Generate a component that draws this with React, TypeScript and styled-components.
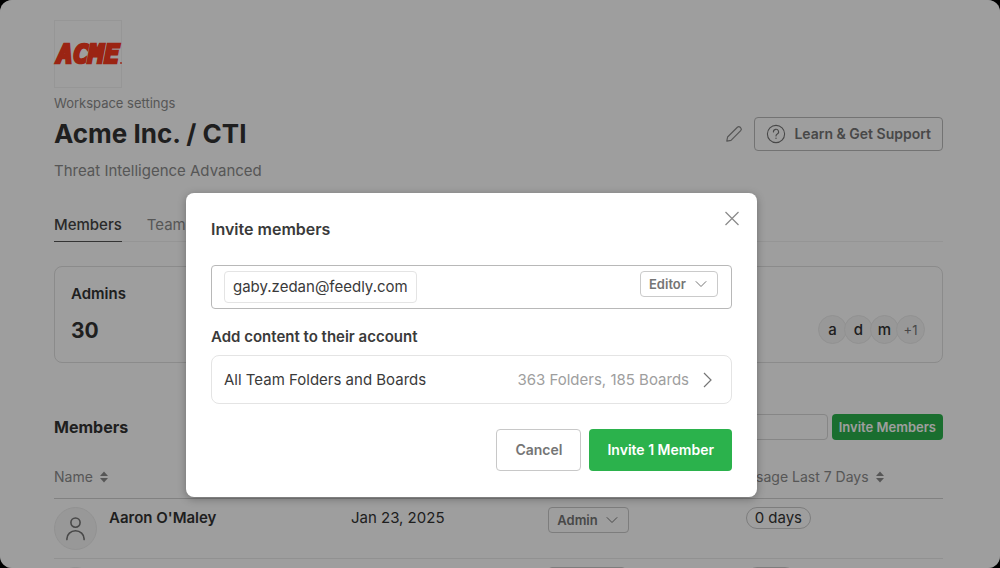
import React from "react";
import styled, { createGlobalStyle, css } from "styled-components";

const GlobalStyle = createGlobalStyle`
  *, *::before, *::after { box-sizing: border-box; }
  body {
    margin: 0;
    background: #000;
    color: #333;
    font-family: Inter, "Liberation Sans", sans-serif;
    font-size: 15px;
    line-height: 20px;
  }
  button, input, select { font: inherit; color: inherit; }
  button { cursor: pointer; }
  h1, h2, p { margin: 0; }
`;

const Frame = styled.div`
  position: relative;
  height: 100vh;
  overflow: hidden;
  border-radius: 12px;
  background: #fff;
`;

const Page = styled.main`
  padding: 20px 57px 0 54px;
`;

const Logo = styled.div`
  width: 68px;
  height: 68px;
  border: 1px solid #f3f3f3;
  svg {
    display: block;
    overflow: visible;
  }
  text {
    font-family: "DejaVu Sans Mono", "Liberation Mono", monospace;
    font-size: 26px;
    font-weight: 700;
    font-style: italic;
  }
`;

const Eyebrow = styled.p`
  margin-top: 5px;
  color: #8c8c8c;
  font-size: 13px;
`;

const TitleRow = styled.div`
  display: flex;
  align-items: center;
  justify-content: space-between;
  height: 42px;
`;

const Title = styled.h1`
  font-size: 26px;
  font-weight: 700;
  line-height: 32px;
`;

const TitleActions = styled.div`
  display: flex;
  align-items: center;
  gap: 11px;
`;

const IconButton = styled.button`
  display: flex;
  padding: 0;
  border: 0;
  background: none;
  color: #8c8c8c;
`;

const SupportButton = styled.button`
  display: flex;
  align-items: center;
  gap: 8px;
  height: 34px;
  padding: 0 11px;
  border: 1px solid #bababa;
  border-radius: 4px;
  background: none;
  color: #757575;
  font-size: 14px;
  font-weight: 600;
`;

const Subtitle = styled.p`
  margin-top: 6px;
  color: #8c8c8c;
`;

const Tabs = styled.nav`
  display: flex;
  gap: 25px;
  margin-top: 34px;
  border-bottom: 1px solid #f0f0f0;
`;

const Tab = styled.a<{ $active?: boolean }>`
  height: 27px;
  margin-bottom: -1px;
  border-bottom: 1px solid ${(p) => (p.$active ? "#555" : "transparent")};
  color: ${(p) => (p.$active ? "#444" : "#8c8c8c")};
  font-weight: ${(p) => (p.$active ? 500 : 400)};
  text-decoration: none;
`;

const StatsCard = styled.section`
  display: flex;
  align-items: flex-end;
  justify-content: space-between;
  height: 97px;
  margin-top: 24px;
  padding: 16px 17px 18px 16px;
  border: 1px solid #e0e0e0;
  border-radius: 8px;
`;

const StatLabel = styled.h2`
  font-size: 15px;
  font-weight: 600;
`;

const StatValue = styled.p`
  margin-top: 14px;
  font-size: 21px;
  font-weight: 700;
  line-height: 26px;
`;

const Avatars = styled.div`
  display: flex;
`;

const Avatar = styled.span<{ $muted?: boolean }>`
  display: flex;
  align-items: center;
  justify-content: center;
  width: 29px;
  height: 29px;
  border: 1px solid #ebebeb;
  border-radius: 50%;
  background: #f5f5f5;
  color: ${(p) => (p.$muted ? "#757575" : "#333")};
  font-size: ${(p) => (p.$muted ? 13 : 15)}px;
  font-weight: ${(p) => (p.$muted ? 400 : 500)};
  & + & { margin-left: -3px; }
`;

const SectionHeader = styled.div`
  display: flex;
  align-items: center;
  justify-content: space-between;
  margin-top: 51px;
`;

const SectionTitle = styled.h2`
  font-size: 16px;
  font-weight: 700;
`;

const SectionTools = styled.div`
  display: flex;
  gap: 4px;
`;

const SearchInput = styled.input`
  width: 200px;
  height: 26px;
  border: 1px solid #d8d8d8;
  border-radius: 4px;
  background: none;
`;

const solidGreen = css`
  border: 0;
  border-radius: 4px;
  background: #2bb24c;
  color: #fff;
  font-weight: 600;
`;

const SmallGreenButton = styled.button`
  ${solidGreen}
  height: 26px;
  padding: 0 7px;
  font-size: 13px;
`;

const Table = styled.table`
  width: 100%;
  margin-top: 16px;
  border-collapse: separate;
  border-spacing: 0;
  table-layout: fixed;
`;

const HeadCell = styled.th<{ $wide?: boolean }>`
  width: ${(p) => (p.$wide ? "33.4%" : "22.2%")};
  height: 43px;
  padding: 0;
  border-bottom: 1px solid #d0d0d0;
  text-align: left;
`;

const SortButton = styled.button`
  display: flex;
  align-items: center;
  gap: 7px;
  padding: 0;
  border: 0;
  background: none;
  color: #8c8c8c;
  font-size: 14px;
  font-weight: 400;
`;

const Cell = styled.td`
  height: 60px;
  padding: 8px 0;
  border-bottom: 1px solid #ebebeb;
  vertical-align: top;
`;

const Member = styled.div`
  display: flex;
  gap: 12px;
  font-weight: 600;
`;

const CellText = styled.span`
  display: block;
  height: 22px;
  line-height: 22px;
`;

const UserBadge = styled.span`
  display: flex;
  align-items: center;
  justify-content: center;
  width: 43px;
  height: 43px;
  border: 1px solid #ebebeb;
  border-radius: 50%;
  background: #f5f5f5;
  color: #757575;
`;

const DaysPill = styled.span`
  display: flex;
  align-items: center;
  width: fit-content;
  min-width: 50px;
  height: 22px;
  padding: 0 8px;
  border: 1px solid #cacaca;
  border-radius: 11px;
`;

const SelectWrap = styled.span<{ $width: number }>`
  display: flex;
  position: relative;
  width: ${(p) => p.$width}px;
  height: 26px;
  color: #757575;
  svg {
    position: absolute;
    top: 9px;
    right: 11px;
    pointer-events: none;
  }
`;

const Select = styled.select`
  appearance: none;
  width: 100%;
  padding: 0 8px;
  border: 1px solid #cacaca;
  border-radius: 4px;
  background: none;
  font-size: 13px;
  font-weight: 600;
`;

const Overlay = styled.div`
  display: flex;
  position: absolute;
  inset: 0;
  align-items: flex-start;
  justify-content: center;
  padding: 193px 57px 0 0;
  background: rgba(0, 0, 0, 0.38);
`;

const Dialog = styled.section`
  width: 571px;
  max-width: 100%;
  padding: 18px 25px 26px;
  border-radius: 8px;
  background: #fff;
  color: #3a3a3a;
  box-shadow: 0 2px 8px rgba(0, 0, 0, 0.3);
`;

const DialogHeader = styled.header`
  display: flex;
  align-items: flex-start;
  justify-content: space-between;
  height: 54px;
`;

const DialogTitle = styled.h2`
  padding-top: 8px;
  font-size: 16px;
  font-weight: 600;
`;

const CloseButton = styled(IconButton)`
  margin-right: -8px;
`;

const InviteField = styled.div`
  display: flex;
  height: 44px;
  padding: 5px 13px 5px 12px;
  border: 1px solid #b8b8b8;
  border-radius: 4px;
`;

const EmailChip = styled.span`
  display: flex;
  align-items: center;
  height: 32px;
  padding: 0 8px;
  border: 1px solid #e4e4e4;
  border-radius: 4px;
`;

const EmailInput = styled.input`
  flex: 1;
  min-width: 0;
  border: 0;
  outline: 0;
  background: none;
`;

const FieldLabel = styled.p`
  margin: 18px 0 8px;
  font-weight: 600;
`;

const ContentPicker = styled.button`
  display: flex;
  align-items: center;
  width: 100%;
  height: 49px;
  padding: 0 16px 0 12px;
  border: 1px solid #e4e4e4;
  border-radius: 8px;
  background: none;
  text-align: left;
`;

const PickerCount = styled.span`
  margin-left: auto;
  margin-right: 12px;
  color: #9e9e9e;
`;

const DialogFooter = styled.footer`
  display: flex;
  justify-content: flex-end;
  gap: 8px;
  margin-top: 25px;
`;

const CancelButton = styled.button`
  height: 42px;
  padding: 0 18px;
  border: 1px solid #c8c8c8;
  border-radius: 4px;
  background: none;
  color: #757575;
  font-size: 14px;
  font-weight: 600;
`;

const InviteButton = styled.button`
  ${solidGreen}
  height: 42px;
  padding: 0 18px;
  font-size: 14px;
`;

const AcmeLogo = () => (
  <svg width="66" height="66" viewBox="0 0 66 66" fill="#fb3a20">
    <text x="2" y="42" stroke="#fb3a20" strokeWidth="2.4">ACME</text>
    <circle cx="66" cy="42" r="0.9" />
  </svg>
);

const Pencil = () => (
  <svg width="18" height="18" viewBox="0 0 18 18" fill="none" stroke="currentColor" strokeWidth="1.2" strokeLinejoin="round">
    <path d="M1.8 16.2 2.6 12 12.4 2.3a2 2 0 0 1 2.8 0l.5.5a2 2 0 0 1 0 2.8L6 15.4Z" />
  </svg>
);

const Help = () => (
  <svg width="20" height="20" viewBox="0 0 20 20" fill="none" stroke="currentColor" strokeWidth="1.1" strokeLinecap="round">
    <circle cx="10" cy="10" r="8.6" />
    <path d="M7.4 7.9a2.6 2.5 0 1 1 3.9 2.1c-.9.5-1.3.9-1.3 1.9" />
    <circle cx="10" cy="14.2" r=".7" fill="currentColor" stroke="none" />
  </svg>
);

const ChevronDown = () => (
  <svg width="12" height="8" viewBox="0 0 12 8" fill="none" stroke="currentColor" strokeWidth="1">
    <path d="M.8 1.3 6 6.5l5.2-5.2" />
  </svg>
);

const ChevronRight = () => (
  <svg width="14" height="18" viewBox="0 0 14 18" fill="none" stroke="#757575" strokeWidth="1.2">
    <path d="m3 2 7 7-7 7" />
  </svg>
);

const Sort = () => (
  <svg width="8" height="12" viewBox="0 0 8 12" fill="currentColor">
    <path d="M4 .6 8 5H0Z" />
    <path d="M4 11.4 8 7H0Z" />
  </svg>
);

const Close = () => (
  <svg width="16" height="16" viewBox="0 0 16 16" fill="none" stroke="currentColor" strokeWidth="1.3">
    <path d="m1.5 1 13 13M14.5 1l-13 13" />
  </svg>
);

const Person = () => (
  <svg width="20" height="24" viewBox="0 0 20 24" fill="none" stroke="currentColor" strokeWidth="1.6" strokeLinecap="round">
    <circle cx="9.5" cy="5.6" r="4.6" />
    <path d="M.9 22.6v-.8a8.6 8 0 0 1 17.2 0v.8" />
  </svg>
);

type RoleSelectProps = { value: string; width: number };

const RoleSelect = ({ value, width }: RoleSelectProps) => (
  <SelectWrap $width={width}>
    <Select aria-label="Role" defaultValue={value}>
      <option>{value}</option>
    </Select>
    <ChevronDown />
  </SelectWrap>
);

type MemberRow = { name: string; joined: string; role: string; roleWidth: number; days: string };

const members: MemberRow[] = [
  { name: "Aaron O'Maley", joined: "Jan 23, 2025", role: "Admin", roleWidth: 81, days: "0 days" },
  { name: "", joined: "", role: "", roleWidth: 78, days: "" },
];

export default function App() {
  return (
    <>
      <GlobalStyle />
      <Frame>
        <Page>
          <Logo><AcmeLogo /></Logo>
          <Eyebrow>Workspace settings</Eyebrow>
          <TitleRow>
            <Title>Acme Inc. / CTI</Title>
            <TitleActions>
              <IconButton aria-label="Edit"><Pencil /></IconButton>
              <SupportButton><Help />Learn &amp; Get Support</SupportButton>
            </TitleActions>
          </TitleRow>
          <Subtitle>Threat Intelligence Advanced</Subtitle>
          <Tabs>
            <Tab href="#members" $active>Members</Tab>
            <Tab href="#team">Team</Tab>
          </Tabs>
          <StatsCard>
            <div>
              <StatLabel>Admins</StatLabel>
              <StatValue>30</StatValue>
            </div>
            <Avatars>
              <Avatar>a</Avatar>
              <Avatar>d</Avatar>
              <Avatar>m</Avatar>
              <Avatar $muted>+1</Avatar>
            </Avatars>
          </StatsCard>
          <SectionHeader>
            <SectionTitle>Members</SectionTitle>
            <SectionTools>
              <SearchInput type="search" aria-label="Search" />
              <SmallGreenButton>Invite Members</SmallGreenButton>
            </SectionTools>
          </SectionHeader>
          <Table>
            <thead>
              <tr>
                <HeadCell $wide><SortButton>Name<Sort /></SortButton></HeadCell>
                <HeadCell />
                <HeadCell />
                <HeadCell><SortButton>Usage Last 7 Days<Sort /></SortButton></HeadCell>
              </tr>
            </thead>
            <tbody>
              {members.map((m, i) => (
                <tr key={i}>
                  <Cell>
                    <Member>
                      <UserBadge><Person /></UserBadge>
                      <CellText>{m.name}</CellText>
                    </Member>
                  </Cell>
                  <Cell><CellText>{m.joined}</CellText></Cell>
                  <Cell><RoleSelect value={m.role} width={m.roleWidth} /></Cell>
                  <Cell><DaysPill>{m.days}</DaysPill></Cell>
                </tr>
              ))}
            </tbody>
          </Table>
        </Page>
        <Overlay>
          <Dialog role="dialog" aria-modal="true" aria-labelledby="invite-title">
            <DialogHeader>
              <DialogTitle id="invite-title">Invite members</DialogTitle>
              <CloseButton aria-label="Close"><Close /></CloseButton>
            </DialogHeader>
            <InviteField>
              <EmailChip>gaby.zedan@feedly.com</EmailChip>
              <EmailInput type="email" aria-label="Email" />
              <RoleSelect value="Editor" width={78} />
            </InviteField>
            <FieldLabel id="content-label">Add content to their account</FieldLabel>
            <ContentPicker aria-describedby="content-label">
              <span>All Team Folders and Boards</span>
              <PickerCount>363 Folders, 185 Boards</PickerCount>
              <ChevronRight />
            </ContentPicker>
            <DialogFooter>
              <CancelButton>Cancel</CancelButton>
              <InviteButton>Invite 1 Member</InviteButton>
            </DialogFooter>
          </Dialog>
        </Overlay>
      </Frame>
    </>
  );
}
